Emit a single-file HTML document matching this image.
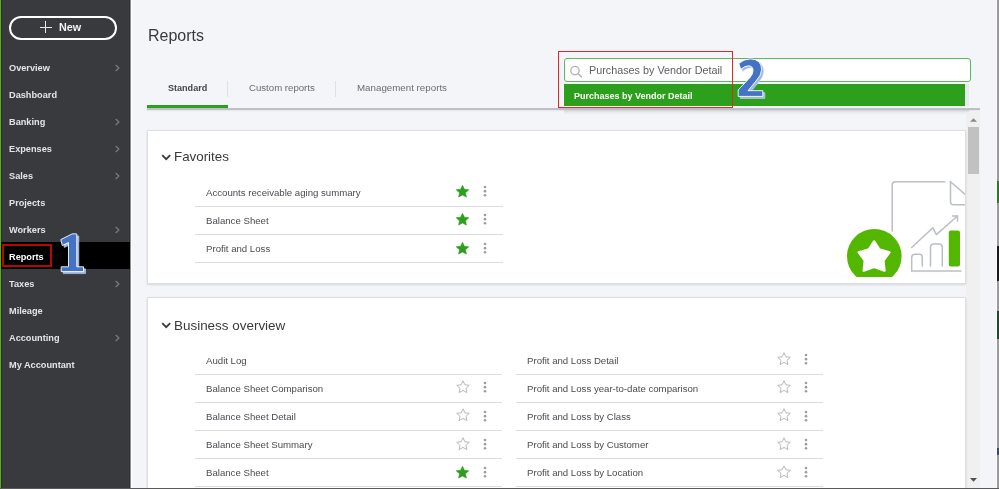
<!DOCTYPE html>
<html><head><meta charset="utf-8"><style>
html,body{margin:0;padding:0;width:999px;height:489px;overflow:hidden;background:#f4f5f8;}
body{position:relative;font-family:"Liberation Sans",sans-serif;}
.t{position:absolute;white-space:nowrap;-webkit-font-smoothing:antialiased;will-change:transform;}
.r{position:absolute;}
.card{position:absolute;background:#fff;border:1px solid #dcdee3;box-shadow:0 1px 2px rgba(0,0,0,0.12);}
</style></head><body>
<div class="r" style="left:0px;top:0px;width:130px;height:489px;background:#393a3d;"></div>
<div class="r" style="left:0px;top:0px;width:1px;height:489px;background:#53b700;"></div>
<div class="r" style="left:1px;top:0px;width:1px;height:489px;background:#2e2a3a;"></div>
<div class="r" style="left:128px;top:0px;width:1px;height:489px;background:#3d3e42;"></div>
<div class="r" style="left:129px;top:0px;width:1px;height:489px;background:#2b2c30;"></div>
<div class="r" style="left:130px;top:0px;width:1px;height:489px;background:#8e8f93;"></div>
<div class="r" style="left:131px;top:0px;width:1px;height:489px;background:#ffffff;"></div>
<div class="r" style="left:9px;top:16px;width:104px;height:20px;border:2px solid #fff;border-radius:12px;"></div>
<div class="r" style="left:39.5px;top:26.6px;width:12.5px;height:1.4px;background:#e8e8ea;"></div>
<div class="r" style="left:45.1px;top:21.2px;width:1.4px;height:12.3px;background:#e8e8ea;"></div>
<div class="t" style="left:59.30px;top:21.22px;font-size:10.8px;line-height:12.06px;font-weight:700;color:#f4f4f5;">New</div>
<div class="t" style="left:9.30px;top:62.67px;font-size:9.2px;line-height:10.28px;font-weight:700;color:#e3e4e6;">Overview</div>
<svg class="r" style="left:113px;top:64px" width="8" height="9"><path d="M3 1.3 L5.9 4 L3 6.7" fill="none" stroke="#7a7d83" stroke-width="1.2" stroke-linecap="round" stroke-linejoin="round"/></svg>
<div class="t" style="left:9.30px;top:89.67px;font-size:9.2px;line-height:10.28px;font-weight:700;color:#e3e4e6;">Dashboard</div>
<div class="t" style="left:9.30px;top:116.67px;font-size:9.2px;line-height:10.28px;font-weight:700;color:#e3e4e6;">Banking</div>
<svg class="r" style="left:113px;top:118px" width="8" height="9"><path d="M3 1.3 L5.9 4 L3 6.7" fill="none" stroke="#7a7d83" stroke-width="1.2" stroke-linecap="round" stroke-linejoin="round"/></svg>
<div class="t" style="left:9.30px;top:143.67px;font-size:9.2px;line-height:10.28px;font-weight:700;color:#e3e4e6;">Expenses</div>
<svg class="r" style="left:113px;top:145px" width="8" height="9"><path d="M3 1.3 L5.9 4 L3 6.7" fill="none" stroke="#7a7d83" stroke-width="1.2" stroke-linecap="round" stroke-linejoin="round"/></svg>
<div class="t" style="left:9.30px;top:170.67px;font-size:9.2px;line-height:10.28px;font-weight:700;color:#e3e4e6;">Sales</div>
<svg class="r" style="left:113px;top:172px" width="8" height="9"><path d="M3 1.3 L5.9 4 L3 6.7" fill="none" stroke="#7a7d83" stroke-width="1.2" stroke-linecap="round" stroke-linejoin="round"/></svg>
<div class="t" style="left:9.30px;top:197.67px;font-size:9.2px;line-height:10.28px;font-weight:700;color:#e3e4e6;">Projects</div>
<div class="t" style="left:9.30px;top:224.67px;font-size:9.2px;line-height:10.28px;font-weight:700;color:#e3e4e6;">Workers</div>
<svg class="r" style="left:113px;top:226px" width="8" height="9"><path d="M3 1.3 L5.9 4 L3 6.7" fill="none" stroke="#7a7d83" stroke-width="1.2" stroke-linecap="round" stroke-linejoin="round"/></svg>
<div class="r" style="left:1px;top:242px;width:129px;height:27px;background:#000000;"></div>
<div class="r" style="left:2px;top:244px;width:46px;height:19px;border:2px solid #b40808;"></div>
<div class="t" style="left:9.30px;top:251.77px;font-size:9.2px;line-height:10.28px;font-weight:700;color:#ffffff;">Reports</div>
<div class="t" style="left:9.30px;top:278.67px;font-size:9.2px;line-height:10.28px;font-weight:700;color:#e3e4e6;">Taxes</div>
<svg class="r" style="left:113px;top:280px" width="8" height="9"><path d="M3 1.3 L5.9 4 L3 6.7" fill="none" stroke="#7a7d83" stroke-width="1.2" stroke-linecap="round" stroke-linejoin="round"/></svg>
<div class="t" style="left:9.30px;top:305.67px;font-size:9.2px;line-height:10.28px;font-weight:700;color:#e3e4e6;">Mileage</div>
<div class="t" style="left:9.30px;top:332.67px;font-size:9.2px;line-height:10.28px;font-weight:700;color:#e3e4e6;">Accounting</div>
<svg class="r" style="left:113px;top:334px" width="8" height="9"><path d="M3 1.3 L5.9 4 L3 6.7" fill="none" stroke="#7a7d83" stroke-width="1.2" stroke-linecap="round" stroke-linejoin="round"/></svg>
<div class="t" style="left:9.30px;top:359.67px;font-size:9.2px;line-height:10.28px;font-weight:700;color:#e3e4e6;">My Accountant</div>
<div class="r" style="left:132px;top:0px;width:865px;height:489px;background:#f4f5f8;"></div>
<div class="t" style="left:148.30px;top:26.92px;font-size:16px;line-height:17.87px;font-weight:400;color:#393a3d;">Reports</div>
<div class="t" style="left:167.70px;top:83.11px;font-size:9.05px;line-height:10.11px;font-weight:700;color:#44454a;">Standard</div>
<div class="r" style="left:227px;top:81px;width:1px;height:16px;background:#dfe1e5;"></div>
<div class="t" style="left:248.80px;top:82.56px;font-size:9.65px;line-height:10.78px;font-weight:400;color:#6b6c72;">Custom reports</div>
<div class="r" style="left:335px;top:81px;width:1px;height:16px;background:#dfe1e5;"></div>
<div class="t" style="left:356.50px;top:83.07px;font-size:9.75px;line-height:10.89px;font-weight:400;color:#6b6c72;">Management reports</div>
<div class="r" style="left:147px;top:108px;width:833px;height:2px;background:#bdc0c6;"></div>
<div class="r" style="left:147px;top:110px;width:833px;height:2px;background:linear-gradient(#e2e4e8,#f4f5f8);"></div>
<div class="r" style="left:564px;top:110px;width:405px;height:5px;background:linear-gradient(rgba(0,0,0,0.09),rgba(0,0,0,0));"></div>
<div class="r" style="left:147px;top:105px;width:81px;height:3px;background:#2ca01c;"></div>
<div class="r" style="left:564px;top:58px;width:405px;height:22px;border:1px solid #5cb85c;border-radius:3px;background:#fff;"></div>
<svg class="r" style="left:569px;top:65px" width="15" height="13"><circle cx="6" cy="5.6" r="4.2" fill="none" stroke="#aeb1b7" stroke-width="1.3"/><path d="M9 8.6 L12.6 12" stroke="#aeb1b7" stroke-width="1.4" stroke-linecap="round"/></svg>
<div class="t" style="left:588.70px;top:64.42px;font-size:10.8px;line-height:12.06px;font-weight:400;color:#5d5e63;">Purchases by Vendor Detail</div>
<div class="r" style="left:564px;top:84px;width:401px;height:22px;background:#2ca01c;"></div>
<div class="r" style="left:965px;top:84px;width:4px;height:22px;background:#e6e9ef;"></div>
<div class="t" style="left:574.30px;top:90.65px;font-size:9px;line-height:10.05px;font-weight:700;color:#ffffff;">Purchases by Vendor Detail</div>
<div class="r" style="left:558px;top:51px;width:173px;height:55px;border:1px solid #e02828;"></div>
<div class="r" style="left:966px;top:112px;width:14px;height:377px;background:#f0f0f0;"></div>
<svg class="r" style="left:969px;top:117px" width="9" height="6"><path d="M1 4.8 L4.5 1.3 L8 4.8 Z" fill="#8a8a8a"/></svg>
<div class="r" style="left:968px;top:127px;width:11px;height:47px;background:#c1c1c1;"></div>
<svg class="r" style="left:969px;top:477px" width="9" height="6"><path d="M1 1 L4.5 4.8 L8 1 Z" fill="#505050"/></svg>
<div class="card" style="left:147px;top:130px;width:817px;height:152px;"></div>
<div class="card" style="left:147px;top:297px;width:817px;height:200px;"></div>
<svg class="r" style="left:160.8px;top:153.5px" width="11" height="7"><path d="M1.2 1.2 L5.2 5.2 L9.2 1.2" fill="none" stroke="#393a3d" stroke-width="1.8"/></svg>
<div class="t" style="left:173.90px;top:149.91px;font-size:13.35px;line-height:14.91px;font-weight:400;color:#393a3d;">Favorites</div>
<svg class="r" style="left:160.8px;top:321.5px" width="11" height="7"><path d="M1.2 1.2 L5.2 5.2 L9.2 1.2" fill="none" stroke="#393a3d" stroke-width="1.8"/></svg>
<div class="t" style="left:173.60px;top:317.92px;font-size:13.45px;line-height:15.02px;font-weight:400;color:#393a3d;">Business overview</div>
<div class="t" style="left:205.80px;top:188.06px;font-size:9.65px;line-height:10.78px;font-weight:400;color:#4a4b50;">Accounts receivable aging summary</div>
<div class="r" style="left:195.3px;top:205.6px;width:307.4px;height:1px;background:#dcdee3;"></div>
<svg class="r" style="left:455.95px;top:184.6px" width="13" height="13"><path d="M6.5 0.3 L8.4 4.3 L12.8 4.8 L9.5 7.8 L10.4 12.1 L6.5 9.9 L2.6 12.1 L3.5 7.8 L0.2 4.8 L4.6 4.3 Z" fill="#2ca01c" stroke="#2ca01c" stroke-width="0.6" stroke-linejoin="round"/></svg>
<svg class="r" style="left:481.7px;top:183.8px" width="6" height="15"><circle cx="3" cy="3" r="1.3" fill="#9a9da4"/><circle cx="3" cy="7.15" r="1.3" fill="#9a9da4"/><circle cx="3" cy="11.3" r="1.3" fill="#9a9da4"/></svg>
<div class="t" style="left:205.80px;top:216.26px;font-size:9.65px;line-height:10.78px;font-weight:400;color:#4a4b50;">Balance Sheet</div>
<div class="r" style="left:195.3px;top:233.79999999999998px;width:307.4px;height:1px;background:#dcdee3;"></div>
<svg class="r" style="left:455.95px;top:213.15px" width="13" height="13"><path d="M6.5 0.3 L8.4 4.3 L12.8 4.8 L9.5 7.8 L10.4 12.1 L6.5 9.9 L2.6 12.1 L3.5 7.8 L0.2 4.8 L4.6 4.3 Z" fill="#2ca01c" stroke="#2ca01c" stroke-width="0.6" stroke-linejoin="round"/></svg>
<svg class="r" style="left:481.7px;top:212.35000000000002px" width="6" height="15"><circle cx="3" cy="3" r="1.3" fill="#9a9da4"/><circle cx="3" cy="7.15" r="1.3" fill="#9a9da4"/><circle cx="3" cy="11.3" r="1.3" fill="#9a9da4"/></svg>
<div class="t" style="left:205.80px;top:244.46px;font-size:9.65px;line-height:10.78px;font-weight:400;color:#4a4b50;">Profit and Loss</div>
<div class="r" style="left:195.3px;top:262.0px;width:307.4px;height:1px;background:#dcdee3;"></div>
<svg class="r" style="left:455.95px;top:241.7px" width="13" height="13"><path d="M6.5 0.3 L8.4 4.3 L12.8 4.8 L9.5 7.8 L10.4 12.1 L6.5 9.9 L2.6 12.1 L3.5 7.8 L0.2 4.8 L4.6 4.3 Z" fill="#2ca01c" stroke="#2ca01c" stroke-width="0.6" stroke-linejoin="round"/></svg>
<svg class="r" style="left:481.7px;top:240.9px" width="6" height="15"><circle cx="3" cy="3" r="1.3" fill="#9a9da4"/><circle cx="3" cy="7.15" r="1.3" fill="#9a9da4"/><circle cx="3" cy="11.3" r="1.3" fill="#9a9da4"/></svg>
<div class="t" style="left:205.80px;top:355.96px;font-size:9.65px;line-height:10.78px;font-weight:400;color:#4a4b50;">Audit Log</div>
<div class="r" style="left:195.3px;top:373.5px;width:307.0px;height:1px;background:#dcdee3;"></div>
<div class="t" style="left:205.80px;top:384.06px;font-size:9.65px;line-height:10.78px;font-weight:400;color:#4a4b50;">Balance Sheet Comparison</div>
<div class="r" style="left:195.3px;top:401.6px;width:307.0px;height:1px;background:#dcdee3;"></div>
<svg class="r" style="left:455.59999999999997px;top:379.95px" width="14" height="14"><path transform="translate(0.5 0.5)" d="M6.5 0.3 L8.4 4.3 L12.8 4.8 L9.5 7.8 L10.4 12.1 L6.5 9.9 L2.6 12.1 L3.5 7.8 L0.2 4.8 L4.6 4.3 Z" fill="none" stroke="#b5b8be" stroke-width="1" stroke-linejoin="round"/></svg>
<svg class="r" style="left:481.7px;top:380.3px" width="6" height="15"><circle cx="3" cy="3" r="1.3" fill="#9a9da4"/><circle cx="3" cy="7.15" r="1.3" fill="#9a9da4"/><circle cx="3" cy="11.3" r="1.3" fill="#9a9da4"/></svg>
<div class="t" style="left:205.80px;top:412.16px;font-size:9.65px;line-height:10.78px;font-weight:400;color:#4a4b50;">Balance Sheet Detail</div>
<div class="r" style="left:195.3px;top:429.7px;width:307.0px;height:1px;background:#dcdee3;"></div>
<svg class="r" style="left:455.59999999999997px;top:408.25px" width="14" height="14"><path transform="translate(0.5 0.5)" d="M6.5 0.3 L8.4 4.3 L12.8 4.8 L9.5 7.8 L10.4 12.1 L6.5 9.9 L2.6 12.1 L3.5 7.8 L0.2 4.8 L4.6 4.3 Z" fill="none" stroke="#b5b8be" stroke-width="1" stroke-linejoin="round"/></svg>
<svg class="r" style="left:481.7px;top:408.6px" width="6" height="15"><circle cx="3" cy="3" r="1.3" fill="#9a9da4"/><circle cx="3" cy="7.15" r="1.3" fill="#9a9da4"/><circle cx="3" cy="11.3" r="1.3" fill="#9a9da4"/></svg>
<div class="t" style="left:205.80px;top:440.26px;font-size:9.65px;line-height:10.78px;font-weight:400;color:#4a4b50;">Balance Sheet Summary</div>
<div class="r" style="left:195.3px;top:457.8px;width:307.0px;height:1px;background:#dcdee3;"></div>
<svg class="r" style="left:455.59999999999997px;top:436.55px" width="14" height="14"><path transform="translate(0.5 0.5)" d="M6.5 0.3 L8.4 4.3 L12.8 4.8 L9.5 7.8 L10.4 12.1 L6.5 9.9 L2.6 12.1 L3.5 7.8 L0.2 4.8 L4.6 4.3 Z" fill="none" stroke="#b5b8be" stroke-width="1" stroke-linejoin="round"/></svg>
<svg class="r" style="left:481.7px;top:436.90000000000003px" width="6" height="15"><circle cx="3" cy="3" r="1.3" fill="#9a9da4"/><circle cx="3" cy="7.15" r="1.3" fill="#9a9da4"/><circle cx="3" cy="11.3" r="1.3" fill="#9a9da4"/></svg>
<div class="t" style="left:205.80px;top:468.36px;font-size:9.65px;line-height:10.78px;font-weight:400;color:#4a4b50;">Balance Sheet</div>
<div class="r" style="left:195.3px;top:485.90000000000003px;width:307.0px;height:1px;background:#dcdee3;"></div>
<svg class="r" style="left:455.95px;top:466.0px" width="13" height="13"><path d="M6.5 0.3 L8.4 4.3 L12.8 4.8 L9.5 7.8 L10.4 12.1 L6.5 9.9 L2.6 12.1 L3.5 7.8 L0.2 4.8 L4.6 4.3 Z" fill="#2ca01c" stroke="#2ca01c" stroke-width="0.6" stroke-linejoin="round"/></svg>
<svg class="r" style="left:481.7px;top:465.2px" width="6" height="15"><circle cx="3" cy="3" r="1.3" fill="#9a9da4"/><circle cx="3" cy="7.15" r="1.3" fill="#9a9da4"/><circle cx="3" cy="11.3" r="1.3" fill="#9a9da4"/></svg>
<div class="t" style="left:526.90px;top:355.96px;font-size:9.65px;line-height:10.78px;font-weight:400;color:#4a4b50;">Profit and Loss Detail</div>
<div class="r" style="left:516.4px;top:373.5px;width:306.9px;height:1px;background:#dcdee3;"></div>
<svg class="r" style="left:776.8px;top:351.65px" width="14" height="14"><path transform="translate(0.5 0.5)" d="M6.5 0.3 L8.4 4.3 L12.8 4.8 L9.5 7.8 L10.4 12.1 L6.5 9.9 L2.6 12.1 L3.5 7.8 L0.2 4.8 L4.6 4.3 Z" fill="none" stroke="#b5b8be" stroke-width="1" stroke-linejoin="round"/></svg>
<svg class="r" style="left:802.9px;top:352.0px" width="6" height="15"><circle cx="3" cy="3" r="1.3" fill="#9a9da4"/><circle cx="3" cy="7.15" r="1.3" fill="#9a9da4"/><circle cx="3" cy="11.3" r="1.3" fill="#9a9da4"/></svg>
<div class="t" style="left:526.90px;top:384.06px;font-size:9.65px;line-height:10.78px;font-weight:400;color:#4a4b50;">Profit and Loss year-to-date comparison</div>
<div class="r" style="left:516.4px;top:401.6px;width:306.9px;height:1px;background:#dcdee3;"></div>
<svg class="r" style="left:776.8px;top:379.95px" width="14" height="14"><path transform="translate(0.5 0.5)" d="M6.5 0.3 L8.4 4.3 L12.8 4.8 L9.5 7.8 L10.4 12.1 L6.5 9.9 L2.6 12.1 L3.5 7.8 L0.2 4.8 L4.6 4.3 Z" fill="none" stroke="#b5b8be" stroke-width="1" stroke-linejoin="round"/></svg>
<svg class="r" style="left:802.9px;top:380.3px" width="6" height="15"><circle cx="3" cy="3" r="1.3" fill="#9a9da4"/><circle cx="3" cy="7.15" r="1.3" fill="#9a9da4"/><circle cx="3" cy="11.3" r="1.3" fill="#9a9da4"/></svg>
<div class="t" style="left:526.90px;top:412.16px;font-size:9.65px;line-height:10.78px;font-weight:400;color:#4a4b50;">Profit and Loss by Class</div>
<div class="r" style="left:516.4px;top:429.7px;width:306.9px;height:1px;background:#dcdee3;"></div>
<svg class="r" style="left:776.8px;top:408.25px" width="14" height="14"><path transform="translate(0.5 0.5)" d="M6.5 0.3 L8.4 4.3 L12.8 4.8 L9.5 7.8 L10.4 12.1 L6.5 9.9 L2.6 12.1 L3.5 7.8 L0.2 4.8 L4.6 4.3 Z" fill="none" stroke="#b5b8be" stroke-width="1" stroke-linejoin="round"/></svg>
<svg class="r" style="left:802.9px;top:408.6px" width="6" height="15"><circle cx="3" cy="3" r="1.3" fill="#9a9da4"/><circle cx="3" cy="7.15" r="1.3" fill="#9a9da4"/><circle cx="3" cy="11.3" r="1.3" fill="#9a9da4"/></svg>
<div class="t" style="left:526.90px;top:440.26px;font-size:9.65px;line-height:10.78px;font-weight:400;color:#4a4b50;">Profit and Loss by Customer</div>
<div class="r" style="left:516.4px;top:457.8px;width:306.9px;height:1px;background:#dcdee3;"></div>
<svg class="r" style="left:776.8px;top:436.55px" width="14" height="14"><path transform="translate(0.5 0.5)" d="M6.5 0.3 L8.4 4.3 L12.8 4.8 L9.5 7.8 L10.4 12.1 L6.5 9.9 L2.6 12.1 L3.5 7.8 L0.2 4.8 L4.6 4.3 Z" fill="none" stroke="#b5b8be" stroke-width="1" stroke-linejoin="round"/></svg>
<svg class="r" style="left:802.9px;top:436.90000000000003px" width="6" height="15"><circle cx="3" cy="3" r="1.3" fill="#9a9da4"/><circle cx="3" cy="7.15" r="1.3" fill="#9a9da4"/><circle cx="3" cy="11.3" r="1.3" fill="#9a9da4"/></svg>
<div class="t" style="left:526.90px;top:468.36px;font-size:9.65px;line-height:10.78px;font-weight:400;color:#4a4b50;">Profit and Loss by Location</div>
<div class="r" style="left:516.4px;top:485.90000000000003px;width:306.9px;height:1px;background:#dcdee3;"></div>
<svg class="r" style="left:776.8px;top:464.84999999999997px" width="14" height="14"><path transform="translate(0.5 0.5)" d="M6.5 0.3 L8.4 4.3 L12.8 4.8 L9.5 7.8 L10.4 12.1 L6.5 9.9 L2.6 12.1 L3.5 7.8 L0.2 4.8 L4.6 4.3 Z" fill="none" stroke="#b5b8be" stroke-width="1" stroke-linejoin="round"/></svg>
<svg class="r" style="left:802.9px;top:465.2px" width="6" height="15"><circle cx="3" cy="3" r="1.3" fill="#9a9da4"/><circle cx="3" cy="7.15" r="1.3" fill="#9a9da4"/><circle cx="3" cy="11.3" r="1.3" fill="#9a9da4"/></svg>
<svg class="r" style="left:840px;top:170px" width="125" height="107" viewBox="840 170 125 107">
<g fill="none" stroke="#babec5" stroke-width="1.5" stroke-linejoin="round" stroke-linecap="round">
<path d="M892.2 231 V185 Q892.2 181.8 895.4 181.8 H944.6"/>
<path d="M950.5 181.8 L966 195"/>
<path d="M950.5 181.8 V201.5 Q950.5 204.8 953.8 204.8 H966"/>
<path d="M911.7 247.5 L932.9 227.8 L936.4 234.6 L957.5 216"/>
<path d="M952.5 216 H957.5 V221"/>
<path d="M911.7 271 V257.5 Q911.7 254.3 914.9 254.3 H919.2 Q922.3 254.3 922.3 257.5 V266"/>
<path d="M930.5 266 V247.2 Q930.5 244 933.7 244 H939.1 Q942.3 244 942.3 247.2 V266"/>
<path d="M911.7 271 H961"/>
</g>
<rect x="948.8" y="230.6" width="11.2" height="36" rx="2" fill="#53b700"/>
<circle cx="874.3" cy="256.2" r="27.3" fill="#53b700"/>
<path d="M874.1 241.5 L879.3 249.3 L889.5 252.3 L883.4 260.6 L884.5 270.6 L874.1 266.9 L863.7 270.6 L864.8 260.6 L858.7 252.3 L868.9 249.3 Z" fill="#fff" stroke="#fff" stroke-width="2.4" stroke-linejoin="round"/>
</svg>
<svg class="r" style="left:0;top:0" width="999" height="489">
<path d="M60.8 239.6 L71.9 234 Q74 233.5 76.8 234 L76.8 266.8 L83.5 266.8 L83.5 271.6 L61.2 271.6 L61.2 266.8 L68.5 266.8 L68.5 242.6 L62.3 245.5 Z" transform="translate(2 2)" fill="#a3b8e2" stroke="#c9d6ef" stroke-width="0.6" stroke-linejoin="round"/>
<path d="M60.8 239.6 L71.9 234 Q74 233.5 76.8 234 L76.8 266.8 L83.5 266.8 L83.5 271.6 L61.2 271.6 L61.2 266.8 L68.5 266.8 L68.5 242.6 L62.3 245.5 Z" fill="#4472c4" stroke="#ffffff" stroke-width="0.9" stroke-linejoin="round"/>
<path d="M738.8 63.5 Q744 58.9 750.5 58.9 Q761.6 59.2 761.6 69.5 Q761.6 75 756 81 L748 90.7 L762.8 90.7 L762.8 96.4 L738.2 96.4 L738.2 90 L750 77.5 Q753 74 753 70.5 Q753 66 748.5 65.8 Q744.5 65.8 740.8 69.5 Z" transform="translate(2 2)" fill="#a3b8e2" stroke="#c9d6ef" stroke-width="0.6" stroke-linejoin="round"/>
<path d="M738.8 63.5 Q744 58.9 750.5 58.9 Q761.6 59.2 761.6 69.5 Q761.6 75 756 81 L748 90.7 L762.8 90.7 L762.8 96.4 L738.2 96.4 L738.2 90 L750 77.5 Q753 74 753 70.5 Q753 66 748.5 65.8 Q744.5 65.8 740.8 69.5 Z" fill="#4472c4" stroke="#ffffff" stroke-width="0.9" stroke-linejoin="round"/>
</svg>
<div class="r" style="left:996px;top:0px;width:1px;height:489px;background:#fbfbfc;"></div>
<div class="r" style="left:997px;top:0px;width:2px;height:489px;background:#9b9b9b;"></div>
<div class="r" style="left:997px;top:181px;width:2px;height:22px;background:#2a7a1e;"></div>
<div class="r" style="left:997px;top:246px;width:2px;height:35px;background:#1a1a1a;"></div>
<div class="r" style="left:997px;top:311px;width:2px;height:28px;background:#1f4a2e;"></div>
<div class="r" style="left:997px;top:448px;width:2px;height:7px;background:#3a4a6a;"></div>
<div class="r" style="left:0px;top:488px;width:999px;height:1px;background:#5a5a5a;"></div>

</body></html>
